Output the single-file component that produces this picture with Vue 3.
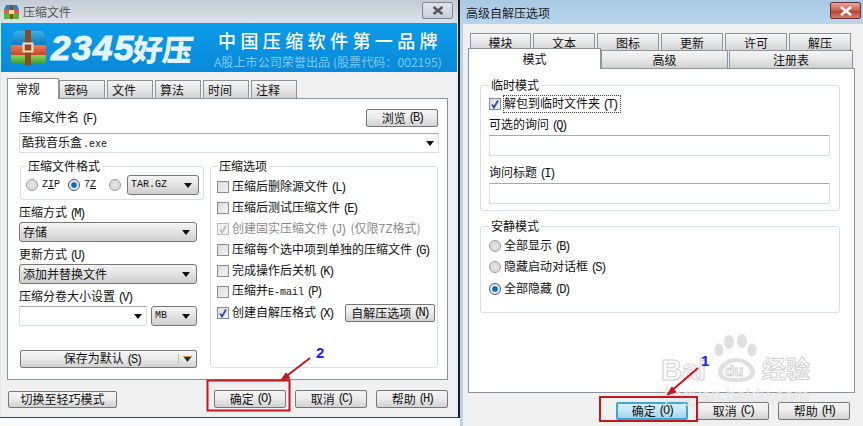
<script setup>
const leftTabs = ['密码', '文件', '算法', '时间', '注释']
const options = [
  { t: '压缩后删除源文件', k: '(L)' },
  { t: '压缩后测试压缩文件', k: '(E)' },
  { t: '创建固实压缩文件', k: '(J)', extra: '(仅限7Z格式)', state: 'disabled' },
  { t: '压缩每个选中项到单独的压缩文件', k: '(G)' },
  { t: '完成操作后关机', k: '(K)' },
  { t: '压缩并', m: 'E-mail', k: '(P)' },
  { t: '创建自解压格式', k: '(X)', state: 'checked', btn: true }
]
const topTabs = ['模块', '文本', '图标', '更新', '许可', '解压']
const quiet = [
  { t: '全部显示', k: '(B)' },
  { t: '隐藏启动对话框', k: '(S)' },
  { t: '全部隐藏', k: '(D)', on: true }
]
</script>

<template>
  <div class="desk">
    <section class="win left">
      <header class="title gray">
        <svg class="appicon" width="15" height="14" viewBox="0 0 15 14">
          <path d="M2 0H13L15 5H0Z" fill="#2a80c4" />
          <rect x="0" y="5" width="15" height="4" fill="#e4603a" />
          <rect x="0" y="9" width="15" height="5" fill="#5cb53a" />
          <rect x="6" y="0" width="3" height="14" fill="#8a4a22" />
          <rect x="5" y="5" width="5" height="4" fill="#f3d9a0" />
        </svg>
        <span class="title-text">压缩文件</span>
        <span class="close plain"><svg width="12" height="9" viewBox="0 0 12 9"><path d="M1.5 1l9 7M10.5 1l-9 7" stroke="#555" stroke-width="2.4" /></svg></span>
      </header>
      <div class="banner">
        <svg class="box" width="37" height="36" viewBox="0 0 37 36">
          <defs>
            <linearGradient id="boxTop" x1="0" y1="0" x2="0" y2="1"><stop offset="0" stop-color="#39b4ee" /><stop offset="1" stop-color="#1474b8" /></linearGradient>
            <linearGradient id="boxMid" x1="0" y1="0" x2="0" y2="1"><stop offset="0" stop-color="#f07a55" /><stop offset="1" stop-color="#c9452b" /></linearGradient>
            <linearGradient id="boxLow" x1="0" y1="0" x2="0" y2="1"><stop offset="0" stop-color="#8ed35a" /><stop offset="1" stop-color="#3c9a2c" /></linearGradient>
          </defs>
          <path d="M6 1H31Q33 1 34 4L36 15H1L3 4Q4 1 6 1Z" fill="url(#boxTop)" />
          <rect x="1" y="15" width="35" height="10" fill="url(#boxMid)" />
          <path d="M1 25H36V31Q36 34 33 34H4Q1 34 1 31Z" fill="url(#boxLow)" />
          <rect x="15" y="0" width="6" height="35" fill="#8a4a22" />
          <rect x="13.5" y="13.5" width="9" height="8" fill="none" stroke="#f2dfc0" stroke-width="2" />
        </svg>
        <span class="brand"><span class="digits">2345</span><span class="hao">好压</span></span>
        <div class="slogan">
          <div class="s1">中国压缩软件第一品牌</div>
          <div class="s2">A股上市公司荣誉出品 (股票代码：002195)</div>
        </div>
      </div>
      <div class="client lc">
        <div class="tabs ltabs">
          <span class="tab active first">常规</span>
          <span v-for="t in leftTabs" :key="t" class="tab">{{ t }}</span>
        </div>
        <div class="panel lpanel">
          <div class="filehead">
            <span>压缩文件名 <i>(F)</i></span>
            <button class="btn browse">浏览 <i>(B)</i></button>
          </div>
          <div class="field combo filename"><span>酷我音乐盒<em>.exe</em></span><b class="arrow"></b></div>
          <div class="cols">
            <div class="lcol">
              <fieldset class="group fmt">
                <legend>压缩文件格式</legend>
                <div class="fmtrow">
                  <span class="radio"></span><em class="rl">Z<u>I</u>P</em>
                  <span class="radio on r2"></span><em class="rl">7<u>Z</u></em>
                  <span class="radio r3"></span>
                  <span class="select tar"><em>TAR.GZ</em><b class="arrow"></b></span>
                </div>
              </fieldset>
              <label class="lb l1">压缩方式 <i>(M)</i></label>
              <div class="select sel">存储<b class="arrow"></b></div>
              <label class="lb">更新方式 <i>(U)</i></label>
              <div class="select sel">添加并替换文件<b class="arrow"></b></div>
              <label class="lb">压缩分卷大小设置 <i>(V)</i></label>
              <div class="volrow">
                <div class="field combo vol"><span></span><b class="arrow"></b></div>
                <div class="select mb"><em>MB</em><b class="arrow"></b></div>
              </div>
              <button class="btn save">
                <span class="savetxt">保存为默认 <i>(S)</i></span><span class="sep"></span>
                <svg width="9" height="6" viewBox="0 0 9 6"><path d="M0 0H9L4.5 6Z" fill="#1c2a4a" /><path d="M0 .5H9" stroke="#e8902a" /></svg>
              </button>
            </div>
            <fieldset class="group opts">
              <legend>压缩选项</legend>
              <div v-for="o in options" :key="o.t" class="opt" :class="{ dis: o.state === 'disabled' }">
                <span class="check" :class="o.state"><svg v-if="o.state" width="10" height="10" viewBox="0 0 10 10"><path d="M2 5.5l2 3L8 1.5" fill="none" stroke-width="1.8" /></svg></span>
                <span class="optlabel">{{ o.t }}<em v-if="o.m">{{ o.m }}</em> <i>{{ o.k }}</i><span v-if="o.extra" class="extra">{{ o.extra }}</span></span>
                <button v-if="o.btn" class="btn sfx">自解压选项 <i>(N)</i></button>
              </div>
            </fieldset>
          </div>
        </div>
        <div class="footer">
          <button class="btn lite">切换至轻巧模式</button>
          <div class="spacer"></div>
          <button class="btn act">确定 <i>(O)</i></button>
          <button class="btn act">取消 <i>(C)</i></button>
          <button class="btn act">帮助 <i>(H)</i></button>
        </div>
      </div>
    </section>

    <section class="win right">
      <header class="title blue">
        <span class="title-text dark">高级自解压选项</span>
        <span class="close red"><svg width="14" height="10" viewBox="0 0 14 10"><path d="M2 1l10 8M12 1L2 9" stroke="#fff" stroke-width="2.6" /></svg></span>
      </header>
      <div class="client rc">
        <div class="tabs rtop">
          <span v-for="t in topTabs" :key="t" class="tab">{{ t }}</span>
        </div>
        <div class="tabs rsecond">
          <span class="tab active mode">模式</span>
          <span class="tab gj">高级</span>
          <span class="tab zc">注册表</span>
        </div>
        <div class="panel rpanel">
          <fieldset class="group temp">
            <legend>临时模式</legend>
            <div class="opt focusrow">
              <span class="check checked"><svg width="10" height="10" viewBox="0 0 10 10"><path d="M2 5.5l2 3L8 1.5" fill="none" stroke-width="1.8" /></svg></span>
              <span class="focus">解包到临时文件夹 <i>(T)</i></span>
            </div>
            <label class="lb r1">可选的询问 <i>(Q)</i></label>
            <div class="field wide"></div>
            <label class="lb r2l">询问标题 <i>(I)</i></label>
            <div class="field wide"></div>
          </fieldset>
          <fieldset class="group quiet">
            <legend>安静模式</legend>
            <div v-for="q in quiet" :key="q.t" class="qrow">
              <span class="radio" :class="{ on: q.on }"></span>
              <span>{{ q.t }} <i>{{ q.k }}</i></span>
            </div>
          </fieldset>
        </div>
        <div class="footer rfoot">
          <button class="btn ract default">确定 <i>(O)</i></button>
          <button class="btn ract">取消 <i>(C)</i></button>
          <button class="btn ract">帮助 <i>(H)</i></button>
        </div>
      </div>
    </section>

    <svg class="marks" width="863" height="426" viewBox="0 0 863 426">
      <g fill="#c8c8c8" opacity=".55">
        <ellipse cx="729" cy="342" rx="5" ry="7" />
        <ellipse cx="742" cy="341" rx="5" ry="7" />
        <ellipse cx="719" cy="350" rx="4.5" ry="6.5" />
        <ellipse cx="752" cy="350" rx="4.5" ry="6.5" />
        <path d="M736 358c-9 0-18 7-18 14 0 8 8 10 18 10s19-2 19-10c0-7-10-14-19-14zM736 362c6 0 14 5 14 10 0 5-6 6-14 6s-13-1-13-6c0-5 7-10 13-10z" />
      </g>
      <text class="wt" x="661" y="380" font-size="29" font-weight="700">Bai</text>
      <text class="wt" x="725" y="376" font-size="15" font-weight="700">du</text>
      <text class="wt" x="762" y="378" font-size="24" font-weight="700">经验</text>
      <text class="wt url" x="664" y="402" font-size="18">jingyan.baidu.com</text>

      <rect x="207.5" y="380.5" width="82" height="30" fill="none" stroke="#c8161d" stroke-width="2" />
      <rect x="600" y="397" width="97" height="24" fill="none" stroke="#c8161d" stroke-width="2" />
      <path d="M310 358L284 378" stroke="#c8161d" stroke-width="2" />
      <path d="M281 380l9-2-4-5z" fill="#c8161d" stroke="#c8161d" />
      <path d="M698 368L670 392" stroke="#c8161d" stroke-width="2" />
      <path d="M667 395l9-3-4-5z" fill="#c8161d" stroke="#c8161d" />
      <text class="num" x="316" y="358">2</text>
      <text class="num" x="701" y="366">1</text>
    </svg>
  </div>
</template>

<style>
html, body { margin: 0; background: #f9f9f9; }
</style>

<style scoped>
.desk {
  position: relative;
  width: 863px;
  height: 426px;
  overflow: hidden;
  background: #f9f9f9;
  font: 12px/14px "Noto Sans CJK SC", sans-serif;
  color: #111;
}
i {
  font: 12px/14px "Liberation Mono", monospace;
  letter-spacing: -2.6px;
}
em {
  font: 11px/14px "Liberation Mono", monospace;
}
u { text-decoration: underline; }
.win { position: absolute; top: 0; box-sizing: border-box; display: flex; flex-direction: column; }
.left { left: 0; width: 460px; height: 418px; border-right: 2px solid #1c1c1c; border-bottom: 1px solid #3a4350; background: #dfe7ee; }
.right { left: 460px; width: 403px; height: 426px; background: #b5d2ea; padding: 0 0 0 3px; }
.title { display: flex; align-items: center; flex: none; height: 23px; }
.gray { background: linear-gradient(#c3ccd5, #dbe4ea); padding: 0 5px 0 4px; }
.blue { height: 24px; background: linear-gradient(#a9c9e4, #b8d5ec); margin: 0 0 0 -3px; padding: 0 2px 0 6px; }
.appicon { margin-right: 4px; }
.title-text { flex: 1; font-size: 12px; color: #555; line-height: 23px; }
.title-text.dark { color: #222; }
.close { display: flex; align-items: center; justify-content: center; box-sizing: border-box; width: 31px; height: 17px; margin-top: -3px; border-radius: 2px; }
.plain { background: linear-gradient(#dfe5ea, #c8d0d8); border: 1px solid #7b8590; }
.red { background: linear-gradient(#e6a79c 0, #cc5d4b 50%, #b43c2b 51%, #d2826f 100%); border: 1px solid #6b2e2a; }
.banner {
  display: flex;
  flex: none;
  height: 49px;
  margin: 0 1px 0 1px;
  padding-left: 9px;
  box-sizing: border-box;
  align-items: flex-start;
  background: linear-gradient(180deg, #0a9cea, #0888d8);
  color: #fff;
  overflow: hidden;
}
.box { margin-top: 7px; flex: none; }
.brand {
  display: flex;
  align-items: center;
  margin: 9px 0 0 4px;
  height: 32px;
  width: 163px;
  flex: none;
  color: #e3f4ff;
  white-space: nowrap;
}
.digits {
  font: italic 700 35px/32px "Liberation Sans", sans-serif;
  letter-spacing: 1.5px;
  -webkit-text-stroke: 1.2px #e3f4ff;
}
.hao {
  font: 900 30px/32px "Noto Sans CJK SC", sans-serif;
  transform: skewX(-8deg);
  margin-left: -2px;
}
.slogan { padding-top: 5px; margin-left: 4px; white-space: nowrap; }
.s1 { font: 500 18px/24px "Noto Sans CJK SC", sans-serif; letter-spacing: 4.4px; }
.s2 { font: 12.1px/14px "Noto Sans CJK SC", sans-serif; color: #7fc9f2; margin-top: 3px; margin-left: -4px; }
.client { flex: 1; background: #f0f0f0; display: flex; flex-direction: column; box-sizing: border-box; }
.lc { margin: 0 1px; padding: 6px 9px 0 6px; }
.tabs { display: flex; flex: none; align-items: flex-end; position: relative; }
.tab {
  display: flex;
  align-items: center;
  justify-content: center;
  box-sizing: border-box;
  height: 18px;
  font-size: 12px;
  border: 1px solid #8e939b;
  border-bottom: none;
  background: linear-gradient(#f6f6f6, #e8e8e8 45%, #d2d2d2);
}
.tab.active { background: #fff; z-index: 2; margin-bottom: -1px; }
.ltabs { height: 20px; }
.ltabs .tab { width: 46px; margin-left: 2px; justify-content: flex-start; padding-left: 4px; }
.ltabs .tab:nth-child(2) { margin-left: 0; }
.ltabs .tab.first { width: 52px; height: 21px; margin-left: 0; padding-left: 8px; }
.panel { background: #fff; border: 1px solid #8e939b; box-sizing: border-box; position: relative; }
.lpanel { height: 282px; width: 441px; padding: 10px 7px 0 11px; display: flex; flex-direction: column; }
.filehead { display: flex; justify-content: space-between; align-items: center; height: 18px; padding-right: 2px; }
.btn {
  font: 12px/14px "Noto Sans CJK SC", sans-serif;
  color: #111;
  padding: 0;
  box-sizing: border-box;
  border: 1px solid #777;
  border-radius: 2px;
  background: linear-gradient(#f5f5f5, #ececec 45%, #d2d2d2);
  height: 18px;
  display: flex;
  align-items: center;
  justify-content: center;
  white-space: pre;
}
.browse { width: 72px; }
.field { box-sizing: border-box; background: #fff; border: 1px solid #d8dde3; border-top-color: #a8a8a8; border-radius: 1px; }
.combo { display: flex; align-items: center; justify-content: space-between; padding: 0 4px 0 2px; }
.filename { height: 20px; width: 420px; margin-top: 6px; font-size: 12px; }
.filename em { font-size: 10px; margin-left: 1px; }
.arrow { display: block; width: 0; height: 0; border: 4px solid transparent; border-top: 5px solid #111; border-bottom: none; flex: none; }
.cols { display: flex; margin-top: 13px; }
.lcol { width: 191px; display: flex; flex-direction: column; flex: none; }
.group { margin: 0; padding: 0; border: 1px solid #d5dfe5; border-radius: 3px; min-width: 0; box-sizing: border-box; }
legend { padding: 0 2px; margin-left: 5px; line-height: 14px; font-size: 12px; }
.fmt { height: 41px; width: 184px; margin-left: 1px; margin-top: -7px; }
.fmtrow { display: flex; align-items: center; padding-left: 5px; height: 20px; margin-top: 2px; }
.radio {
  display: inline-block;
  flex: none;
  box-sizing: border-box;
  width: 12px;
  height: 12px;
  border-radius: 50%;
  border: 1px solid #9a9a9a;
  background: radial-gradient(circle at 50% 50%, #e8e8e8 0, #d8d8d8 55%, #f4f4f4 100%);
}
.radio.on { background: radial-gradient(circle, #0f78c8 0, #0c5fa8 30%, #dfe7ee 48%, #e8e8e8 100%); border-color: #556; }
.rl { margin-left: 4px; font-size: 10px; width: 26px; letter-spacing: 0; }
.r2 { margin-left: 0; }
.rl + .r3 { margin-left: -1px; }
.tar { margin-left: 6px; width: 72px; height: 20px; padding: 0 6px 0 3px; }
.select {
  box-sizing: border-box;
  display: flex;
  align-items: center;
  justify-content: space-between;
  border: 1px solid #777;
  border-radius: 3px;
  background: linear-gradient(#f5f5f5, #e4e4e4 45%, #cfcfcf);
  font-size: 12px;
  padding: 0 6px 0 3px;
}
.select em { font-size: 10px; }
.lb { display: block; height: 14px; line-height: 14px; margin-top: 5px; }
.sel { width: 178px; height: 20px; margin-top: 3px; }
.volrow { display: flex; gap: 4px; margin-top: 3px; }
.vol { width: 128px; height: 20px; }
.mb { width: 46px; height: 20px; }
.save { width: 177px; margin: 24px 0 0 1px; position: relative; justify-content: flex-start; }
.savetxt { width: 157px; text-align: center; padding-left: 5px; box-sizing: border-box; }
.sep { width: 1px; height: 10px; background: #bbb; margin-right: 4px; }
.opts { width: 228px; height: 209px; margin: -7px 0 0 0; padding: 3px 0 0 6px; }
.opts legend { margin-left: 0; }
.opt { display: flex; align-items: center; height: 21px; white-space: nowrap; }
.check {
  flex: none;
  display: flex;
  align-items: center;
  justify-content: center;
  box-sizing: border-box;
  width: 12px;
  height: 12px;
  margin-right: 3px;
  border: 1px solid #8e8e8e;
  background: linear-gradient(135deg, #dcdcdc, #f4f4f4);
}
.check svg { stroke: #2d4f9e; }
.check.disabled { border-color: #bbb; background: #f2f2f2; }
.check.disabled svg { stroke: #bbb; }
.check.checked { background: linear-gradient(135deg, #d8dde8, #f0f2f6); }
.opt.dis .optlabel { color: #8a8a8a; }
.extra { margin-left: 6px; }
.optlabel em { font-size: 10px; }
.sfx { width: 90px; margin-left: 12px; }
.footer { display: flex; align-items: center; flex: none; }
.lc .footer { margin-top: 10px; padding-left: 1px; gap: 9px; width: 440px; }
.spacer { flex: 1; }
.lite { width: 109px; height: 17px; }
.act { width: 72px; height: 18px; }
.rc { padding: 9px 0 0 5px; }
.rtop { padding-left: 2px; height: 17px; gap: 2px; align-items: flex-start; }
.rtop .tab { width: 62px; height: 18px; }
.rtop .tab:first-child { width: 61px; }
.rsecond { height: 18px; }
.rsecond .tab { height: 18px; }
.rsecond .mode { width: 133px; height: 21px; margin-top: -3px; }
.gj { width: 127px; }
.zc { width: 124px; margin-left: 1px; }
.rpanel { width: 387px; height: 325px; padding: 16px 15px 0 11px; }
.temp { height: 133px; width: 360px; padding: 0 9px 0 8px; margin-top: -7px; }
.temp legend, .quiet legend { margin-left: 0; }
.focusrow { height: 16px; margin-top: 4px; }
.focus { outline: 1px dotted #444; line-height: 14px; padding-right: 3px; }
.temp .lb.r1 { margin-top: 5px; }
.wide { width: 341px; height: 21px; margin-top: 4px; }
.temp .lb.r2l { margin-top: 9px; }
.quiet { height: 94px; width: 360px; margin-top: 8px; padding: 2px 0 0 8px; }
.qrow { display: flex; align-items: center; gap: 3px; height: 21.5px; }
.rfoot { margin-top: 9px; padding-left: 148px; gap: 9px; }
.ract { width: 72px; height: 18px; }
.default { background: linear-gradient(#d6f0fb, #c3e6f6 50%, #9dd3ec); border: 2px solid #3aa7d6; }
.marks { position: absolute; left: 0; top: 0; pointer-events: none; }
.wt { font-family: "Liberation Sans", "Noto Sans CJK SC", sans-serif; fill: #fff; fill-opacity: .45; stroke: #c8c8c8; stroke-opacity: .85; stroke-width: 1; }
.wt.url { fill-opacity: .75; stroke: #bdbdbd; stroke-opacity: .35; }
.num { font: 700 15px "Liberation Sans", sans-serif; fill: #1a1aff; }
</style>
